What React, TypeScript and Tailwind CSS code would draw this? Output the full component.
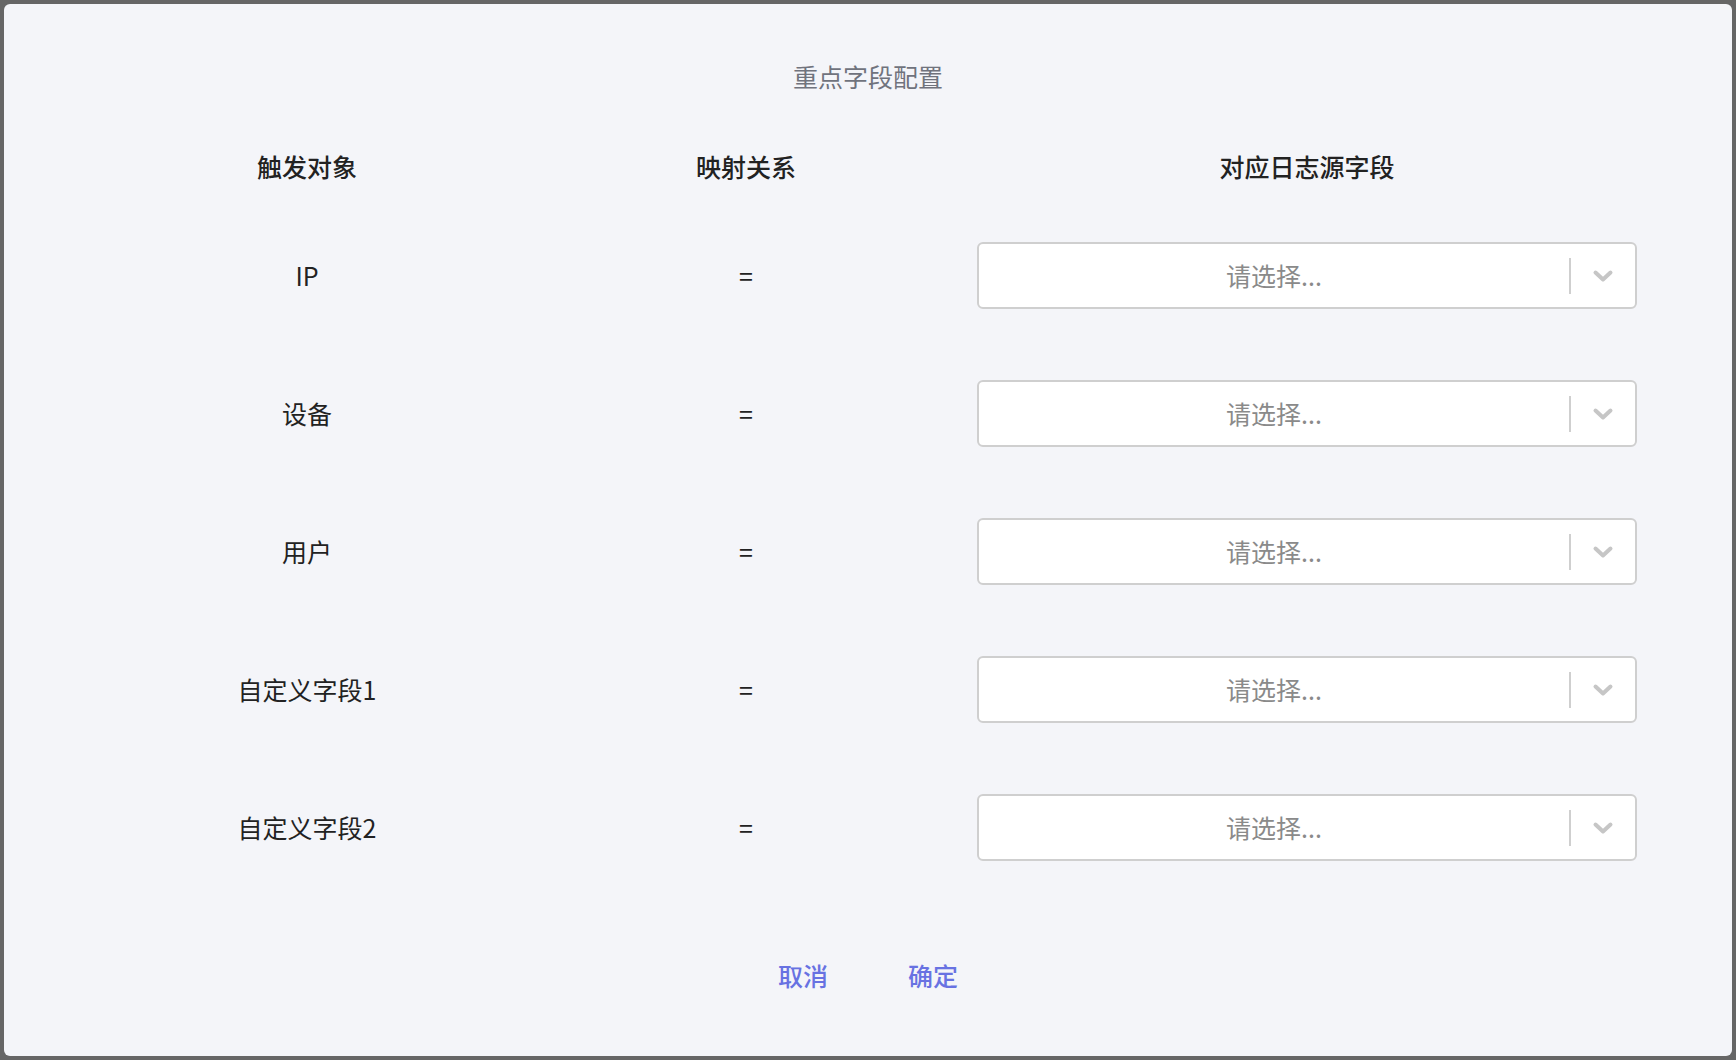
const rows = ["IP", "设备", "用户", "自定义字段1", "自定义字段2"];

function ChevronDown() {
  return (
    <svg width="22" height="14" viewBox="0 0 22 14" fill="none">
      <path d="M3.5 3.5l7.5 7 7.5-7" stroke="#c6c6c6" strokeWidth="4" strokeLinecap="round" strokeLinejoin="round" />
    </svg>
  );
}

function SelectBox() {
  return (
    <div className="flex h-[67px] w-full items-center rounded-[6px] border-2 border-[#cfcfcf] bg-white">
      <div className="flex-1 pb-[2px] text-center text-[25px] leading-[32px] text-[#8a8a8a]">请选择...</div>
      <div className="h-[36px] w-[2px] bg-[#cfcfcf]" />
      <div className="flex w-[64px] items-center justify-center">
        <ChevronDown />
      </div>
    </div>
  );
}

export default function App() {
  return (
    <div
      className="h-[1060px] w-[1736px] bg-[#666666] p-[4px]"
      style={{ fontFamily: '"Noto Sans CJK SC", "Noto Sans", sans-serif' }}
    >
      <div className="flex h-full w-full flex-col rounded-[6px] bg-[#f4f5f9] px-[95px] pt-[56px]">
        {/* Title */}
        <h1 className="text-center text-[25px] leading-[32px] text-[#70737d]">重点字段配置</h1>

        {/* Column headers */}
        <div className="mt-[58px] grid grid-cols-[416px_462px_660px] text-[25px] font-medium leading-[32px] text-[#222222]">
          <div className="text-center">触发对象</div>
          <div className="text-center">映射关系</div>
          <div className="text-center">对应日志源字段</div>
        </div>

        {/* Rows */}
        <div className="mt-[60px] flex flex-col gap-[71px]">
          {rows.map((label) => (
            <div key={label} className="grid h-[67px] grid-cols-[416px_462px_660px] items-center text-[25px] leading-[32px] text-[#222222]">
              <div className="pb-[2px] text-center">{label}</div>
              <div className="pb-[2px] text-center">=</div>
              <SelectBox />
            </div>
          ))}
        </div>

        {/* Footer */}
        <div className="mt-[98px] flex justify-center gap-[80px] text-[25px] font-medium leading-[32px] text-[#6872e2]">
          <button className="w-[50px]">取消</button>
          <button className="w-[50px]">确定</button>
        </div>
      </div>
    </div>
  );
}
